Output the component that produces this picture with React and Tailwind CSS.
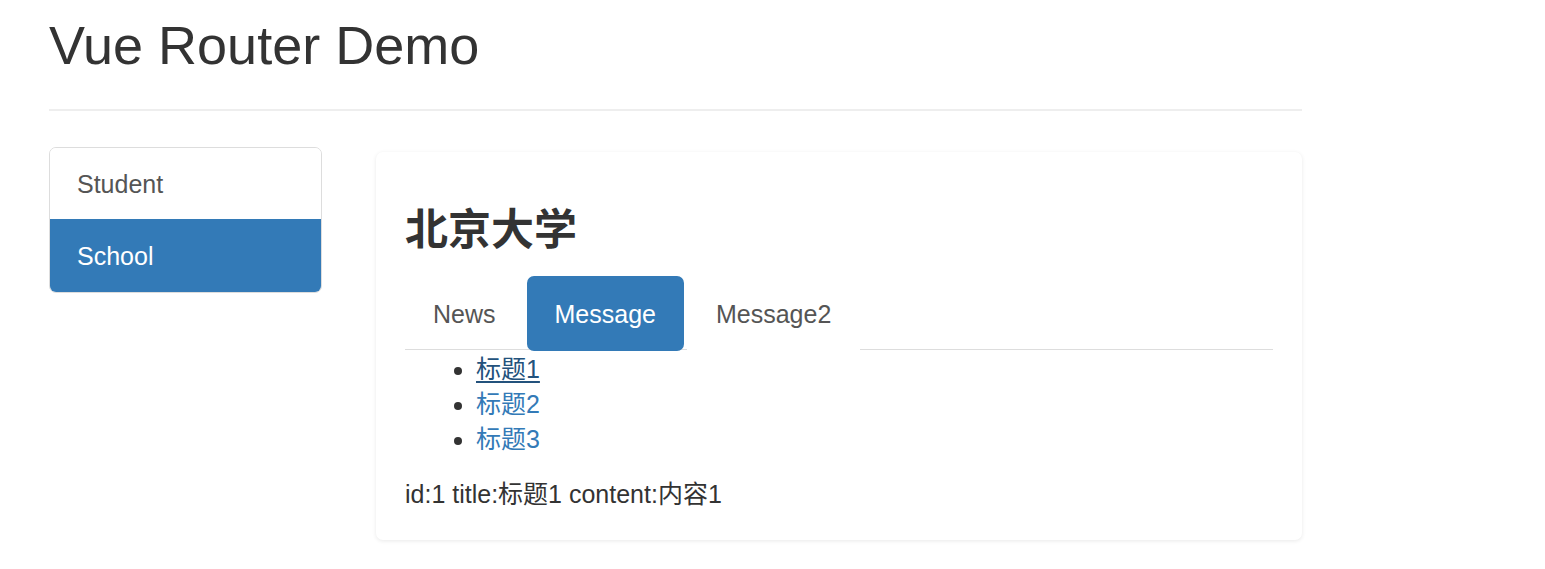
export default function App() {
  const font = { fontFamily: '"Liberation Sans", "Noto Sans CJK SC", Arial, sans-serif' };
  return (
    <div className="min-h-[569px] bg-white text-[#333]" style={font}>
      <div className="ml-[49px] w-[1253px]">
        <div className="pt-[16px] pb-[35px] border-b-2 border-[#eeeeee]">
          <h2 className="text-[54px] leading-[58px] font-normal text-[#333]">Vue Router Demo</h2>
        </div>
        <div className="mt-[36px] flex items-start">
          <div className="w-[273px] rounded-[7px] border border-[#dddddd] overflow-hidden text-[25px] leading-[35px]">
            <div className="px-[27px] pt-[19px] pb-[17px] text-[#555] bg-white">Student</div>
            <div className="px-[27px] pt-[20px] pb-[18px] text-white bg-[#337ab7]">School</div>
          </div>
          <div className="ml-[54px] mt-[5px] w-[926px] rounded-[7px] bg-white shadow-[0_1px_4px_rgba(0,0,0,0.09)] px-[29px] pt-[55px] pb-[28px]">
            <h3 className="text-[43px] leading-[46px] font-semibold text-[#333] mb-[23px]">北京大学</h3>
            <ul className="flex border-b border-[#dddddd] text-[25px] leading-[35px]">
              <li className="-mb-[2px] mr-[3px] px-[28px] pt-[21px] pb-[19px] text-[#555]">News</li>
              <li className="-mb-[2px] mr-[3px] px-[28px] pt-[21px] pb-[19px] rounded-[7px] bg-[#337ab7] text-white">Message</li>
              <li className="-mb-[2px] px-[29px] pt-[21px] pb-[19px] bg-white text-[#555]">Message2</li>
            </ul>
            <ul className="list-disc pl-[71px] mt-[2px] mb-[20px] text-[25px] leading-[35px]">
              <li><span className="text-[#23527c] underline underline-offset-[3px]">标题1</span></li>
              <li><span className="text-[#337ab7]">标题2</span></li>
              <li><span className="text-[#337ab7]">标题3</span></li>
            </ul>
            <p className="text-[25px] leading-[35px]">id:1 title:标题1 content:内容1</p>
          </div>
        </div>
      </div>
    </div>
  );
}
